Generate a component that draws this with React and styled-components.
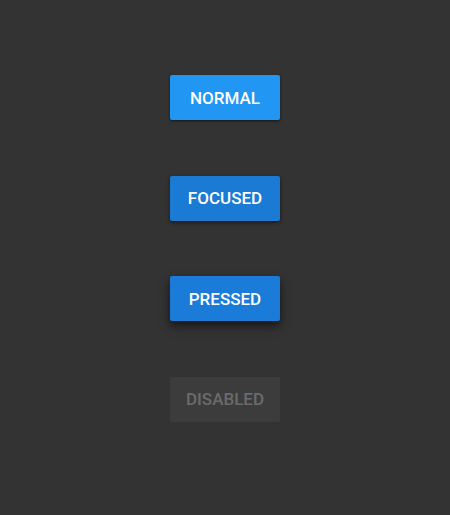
import React from "react";
import styled, { createGlobalStyle } from "styled-components";

const GlobalStyle = createGlobalStyle`
  html, body {
    margin: 0;
    padding: 0;
    background: #333333;
    font-family: Roboto, "Noto Sans", Arial, sans-serif;
  }
`;

const Page = styled.div`
  display: flex;
  flex-direction: column;
  align-items: center;
  gap: 55.6px;
  padding-top: 75px;
  min-height: 515px;
  box-sizing: border-box;
`;

const shadows = {
  normal: "0 1px 3px rgba(0,0,0,0.35), 0 1px 2px rgba(0,0,0,0.3)",
  focused: "0 2px 4px rgba(0,0,0,0.35), 0 1px 3px rgba(0,0,0,0.3)",
  pressed: "0 6px 12px rgba(0,0,0,0.35), 0 3px 6px rgba(0,0,0,0.3)",
  disabled: "none"
};

const backgrounds = {
  normal: "#2196f3",
  focused: "#1a7ad4",
  pressed: "#1a7bd8",
  disabled: "#3c3c3c"
};

const Button = styled.button`
  width: 110px;
  height: 45px;
  border: none;
  border-radius: 2px;
  font-family: Roboto, "Noto Sans", Arial, sans-serif;
  font-size: 17px;
  font-weight: 500;
  letter-spacing: 0;
  text-transform: uppercase;
  color: ${({ state }) => (state === "disabled" ? "#6b6b6b" : "#ffffff")};
  background: ${({ state }) => backgrounds[state]};
  box-shadow: ${({ state }) => shadows[state]};
  cursor: ${({ state }) => (state === "disabled" ? "default" : "pointer")};
  outline: none;
  padding: 0;
`;

const App = () => (
  <>
    <GlobalStyle />
    <Page>
      <Button state="normal">Normal</Button>
      <Button state="focused">Focused</Button>
      <Button state="pressed">Pressed</Button>
      <Button state="disabled" disabled>
        Disabled
      </Button>
    </Page>
  </>
);

export default App;
